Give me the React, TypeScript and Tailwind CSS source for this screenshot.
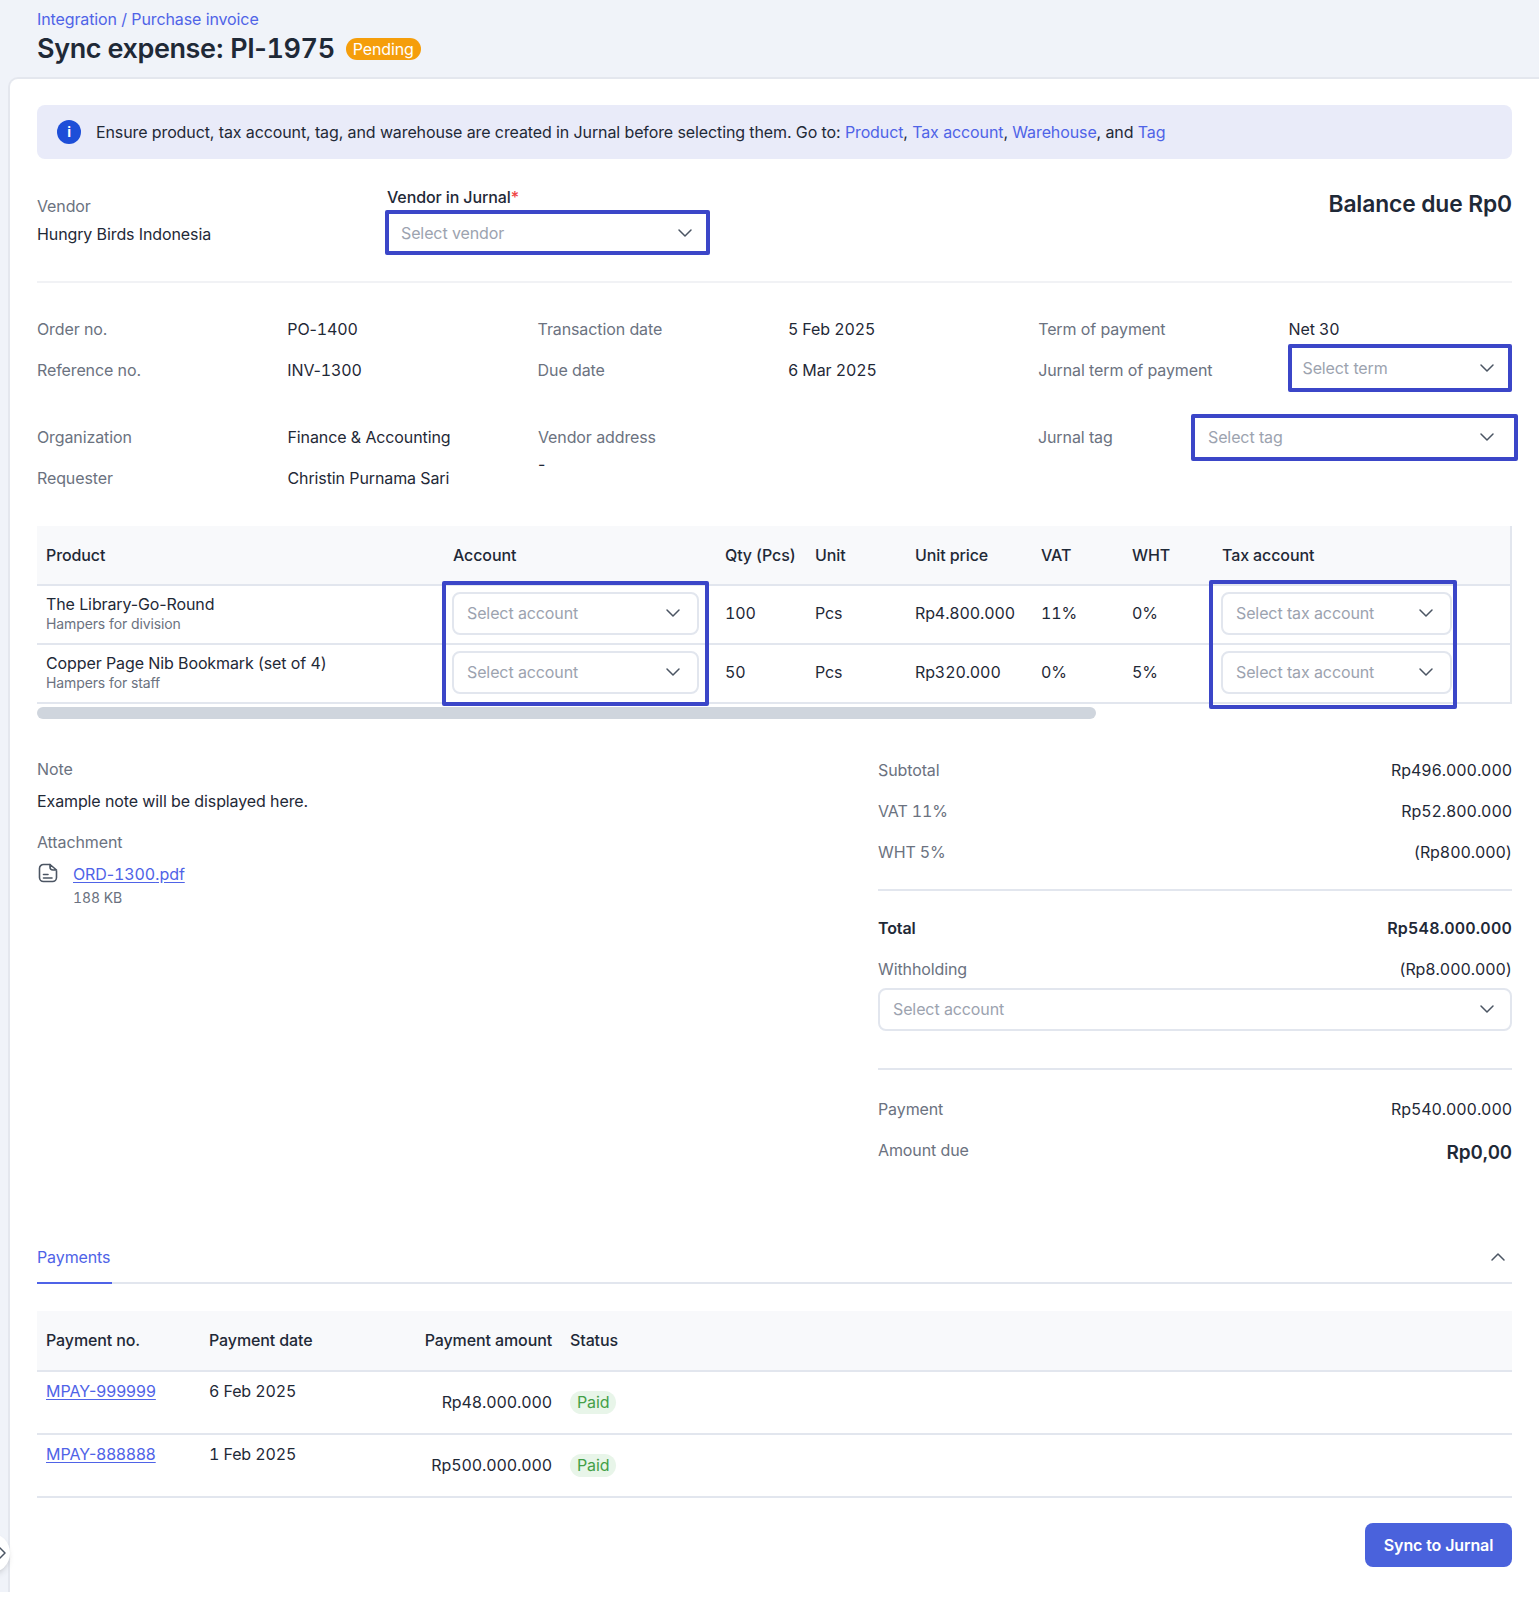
import { ChevronDown, ChevronRight, ChevronUp } from 'lucide-react';

const Select = ({ label, className }: { label: string; className: string }) => (
  <div className={`flex items-center justify-between bg-white text-[#9ca3af] ${className}`}>
    <span>{label}</span>
    <ChevronDown className="size-6 text-[#4b5563]" strokeWidth={1.5} />
  </div>
);

const Link = ({ children }: { children: string }) => <a className="text-[#4f63e7]">{children}</a>;

const Num = ({ children }: { children: string }) => <span className="tabular-nums">{children}</span>;

const rowClass = 'grid h-[40.5px] grid-cols-[repeat(5,250.3px)_1fr] grid-rows-[40.5px] items-center';

const products = [
  { name: 'The Library-Go-Round', note: 'Hampers for division', qty: '100', price: 'Rp4.800.000', vat: '11%', wht: '0%' },
  { name: 'Copper Page Nib Bookmark (set of 4)', note: 'Hampers for staff', qty: '50', price: 'Rp320.000', vat: '0%', wht: '5%' },
];

const payments = [
  { no: 'MPAY-999999', date: '6 Feb 2025', amount: 'Rp48.000.000' },
  { no: 'MPAY-888888', date: '1 Feb 2025', amount: 'Rp500.000.000' },
];

const SumRow = ({ label, value, bold }: { label: string; value: string; bold?: boolean }) => (
  <div className="flex h-[40.8px] items-center justify-between tabular-nums">
    <span className={bold ? 'font-semibold' : 'text-[#6b7280]'}>{label}</span>
    <span className={bold ? 'font-semibold tracking-[0.2px]' : 'tracking-[-0.08px]'}>{value}</span>
  </div>
);

const FileIcon = () => (
  <svg viewBox="0 0 20 20" fill="none" stroke="#4b5563" strokeWidth="1.6" className="size-5" strokeLinecap="round" strokeLinejoin="round">
    <path d="M12 1.5H5.5a4 4 0 0 0-4 4v9a4 4 0 0 0 4 4h9a4 4 0 0 0 4-4V8" />
    <path d="M12 1.5v2.5a3 3 0 0 0 3 3h3.5L12 1.5Z" />
    <path d="M5.5 11.5h4.5M5.5 15h8.5" />
  </svg>
);

function InfoRow2({ label, value }: { label: string; value: string }) {
  return (
    <div className="grid h-[41px] grid-cols-2 items-center">
      <div className="text-[#6b7280]">{label}</div>
      <div>{value}</div>
    </div>
  );
}

export default function App() {
  return (
    <div className="h-[1600px] bg-white text-base leading-6 tracking-[-0.11px] text-[#1f2937] [font-family:Inter,sans-serif]">
      <div className="relative h-[1592px] overflow-hidden bg-[#f0f3f9]">
        <header className="h-[77px] pl-[37px] pt-[7px]">
          <div className="text-[#4f63e7]">Integration / Purchase invoice</div>
          <div className="flex items-center gap-[11px]">
            <h1 className="text-[27px] font-semibold leading-9 tracking-[-0.4px]">
              Sync expense: PI-<Num>1975</Num>
            </h1>
            <span className="-mt-px rounded-full bg-[#f59e0b] px-[7px] leading-[22px] text-white">Pending</span>
          </div>
        </header>

        <main className="relative ml-[8px] h-[1515px] rounded-tl-[10px] border-l-2 border-t-2 border-[#e4e7ee] bg-white pl-[27px] pr-[27px] pt-[26px]">
          <div className="flex h-[54px] items-center rounded-lg bg-[#e9ebf9] pl-[20px]">
            <span className="flex size-6 items-center justify-center rounded-full bg-[#1d4ed8] text-sm font-bold leading-none text-white">i</span>
            <p className="ml-[15px]">
              Ensure product, tax account, tag, and warehouse are created in Jurnal before selecting them. Go to: <Link>Product</Link>, <Link>Tax account</Link>, <Link>Warehouse</Link>, and <Link>Tag</Link>
            </p>
          </div>

          <div className="flex h-[124px] items-start border-b-2 border-[#f1f2f5] pt-[27px]">
            <div className="w-[348px] pt-[8px]">
              <div className="text-[#6b7280]">Vendor</div>
              <div className="mt-[4px]">Hungry Birds Indonesia</div>
            </div>
            <div className="-mt-[1px] w-[325px]">
              <div className="pl-[2px] font-medium leading-6">
                Vendor in Jurnal<span className="text-[#ef4444]">*</span>
              </div>
              <Select label="Select vendor" className="mt-[1px] h-[45px] rounded-[2px] border-4 border-[#3b46c8] pl-[12px] pr-[9px]" />
            </div>
            <div className="ml-auto mt-[4px] text-[22.8px] font-semibold leading-7">Balance due Rp0</div>
          </div>

          <div className="mt-[26px]">
            <div className={rowClass}>
              <div className="text-[#6b7280]">Order no.</div>
              <div>
                PO-<Num>1400</Num>
              </div>
              <div className="text-[#6b7280]">Transaction date</div>
              <Num>5 Feb 2025</Num>
              <div className="text-[#6b7280]">Term of payment</div>
              <Num>Net 30</Num>
            </div>
            <div className={rowClass}>
              <div className="text-[#6b7280]">Reference no.</div>
              <div>
                INV-<Num>1300</Num>
              </div>
              <div className="text-[#6b7280]">Due date</div>
              <Num>6 Mar 2025</Num>
              <div className="text-[#6b7280]">Jurnal term of payment</div>
              <Select label="Select term" className="-mt-[3px] h-[48px] rounded-[2px] border-4 border-[#3b46c8] pl-[10px] pr-[9px]" />
            </div>
          </div>

          <div className="mt-[26px] grid grid-cols-[501px_500px_1fr]">
            <div className="w-[501px]">
              <InfoRow2 label="Organization" value="Finance & Accounting" />
              <InfoRow2 label="Requester" value="Christin Purnama Sari" />
            </div>
            <div>
              <div className="flex h-[41px] items-center text-[#6b7280]">Vendor address</div>
              <div className="-mt-[5px]">-</div>
            </div>
            <div className="flex h-[41px] items-center">
              <div className="w-[153px] shrink-0 text-[#6b7280]">Jurnal tag</div>
              <Select label="Select tag" className="-mr-[6px] mt-[1px] h-[47px] shrink-0 grow rounded-[2px] border-4 border-[#3b46c8] pl-[13px] pr-[15px]" />
            </div>
          </div>

          <div className="relative mt-[28px]">
            <table className="w-full table-fixed border-r-2 border-[#e2e6ee] text-left">
              <colgroup>
                <col className="w-[407px]" />
                <col className="w-[272px]" />
                <col className="w-[90px]" />
                <col className="w-[100px]" />
                <col className="w-[126px]" />
                <col className="w-[91px]" />
                <col className="w-[90px]" />
                <col />
              </colgroup>
              <thead>
                <tr className="h-[59px] border-b-2 border-[#e2e6ee] bg-[#f8f9fb] font-medium">
                  {['Product', 'Account', 'Qty (Pcs)', 'Unit', 'Unit price', 'VAT', 'WHT', 'Tax account'].map((h) => (
                    <th key={h} className="whitespace-nowrap px-[9px] font-medium">
                      {h}
                    </th>
                  ))}
                </tr>
              </thead>
              <tbody>
                {products.map((p) => (
                  <tr key={p.name} className="h-[59px] border-b-2 border-[#e2e6ee]">
                    <td className="px-[9px] pb-[2px]">
                      <div className="leading-5">{p.name}</div>
                      <div className="text-sm leading-[19px] text-[#6b7280]">{p.note}</div>
                    </td>
                    <td className="pb-[3px] pl-[8px]">
                      <Select label="Select account" className="h-[43px] w-[247px] rounded-lg border-2 border-[#e2e6ee] pl-[13px] pr-[12px]" />
                    </td>
                    <td className="px-[9px] pb-[3px] tabular-nums">{p.qty}</td>
                    <td className="px-[9px] pb-[3px]">Pcs</td>
                    <td className="px-[9px] pb-[3px] tabular-nums">{p.price}</td>
                    <td className="px-[9px] pb-[3px] tabular-nums">{p.vat}</td>
                    <td className="px-[9px] pb-[3px] tabular-nums">{p.wht}</td>
                    <td className="pb-[3px] pl-[8px]">
                      <Select label="Select tax account" className="h-[43px] w-[231px] rounded-lg border-2 border-[#e2e6ee] pl-[13px] pr-[12px]" />
                    </td>
                  </tr>
                ))}
              </tbody>
            </table>
            <div className="mt-[3px] h-[12px] w-[1059px] rounded-full bg-[#cfd5dd]" />
            {/* annotation boxes sitting over the table */}
            <div className="absolute left-[405px] top-[55px] h-[125px] w-[267px] rounded-[2px] border-4 border-[#3b46c8]" />
            <div className="absolute left-[1172px] top-[54px] h-[129px] w-[248px] rounded-[2px] border-4 border-[#3b46c8]" />
          </div>

          <div className="mt-[38px] flex items-start justify-between">
            <div>
              <div className="text-[#6b7280]">Note</div>
              <div className="mt-[8px]">Example note will be displayed here.</div>
              <div className="mt-[17px] text-[#6b7280]">Attachment</div>
              <div className="mt-[8px] flex gap-[15px]">
                <div className="pl-px pt-[1px]">
                  <FileIcon />
                </div>
                <div>
                  <a className="text-[#4f63e7] underline underline-offset-2">
                    ORD-<Num>1300</Num>.pdf
                  </a>
                  <div className="text-sm leading-[24px] text-[#6b7280]">
                    <Num>188</Num> KB
                  </div>
                </div>
              </div>
            </div>

            <div className="-mt-[7px] w-[634px]">
              <SumRow label="Subtotal" value="Rp496.000.000" />
              <SumRow label="VAT 11%" value="Rp52.800.000" />
              <SumRow label="WHT 5%" value="(Rp800.000)" />
              <div className="mb-[16px] mt-[17px] border-t-2 border-[#e2e6ee]" />
              <SumRow label="Total" value="Rp548.000.000" bold />
              <SumRow label="Withholding" value="(Rp8.000.000)" />
              <Select label="Select account" className="-mt-[1px] h-[43px] rounded-lg border-2 border-[#e2e6ee] pl-[13px] pr-[11px]" />
              <div className="mb-[19px] mt-[37px] border-t-2 border-[#e2e6ee]" />
              <SumRow label="Payment" value="Rp540.000.000" />
              <div className="flex h-[41px] items-center justify-between">
                <span className="text-[#6b7280]">Amount due</span>
                <span className="pt-[6px] text-[19px] font-semibold tabular-nums">Rp0,00</span>
              </div>
            </div>
          </div>

          <div className="mt-[61px] flex h-[52px] items-center justify-between border-b-2 border-[#e2e6ee]">
            <span className="-mb-[2px] flex h-[52px] w-[75px] items-center border-b-2 border-[#4f63e7] text-[#4f63e7]">Payments</span>
            <ChevronUp className="mr-[2px] size-6 text-[#4b5563]" strokeWidth={1.5} />
          </div>

          <table className="mt-[27px] w-full table-fixed text-left">
            <colgroup>
              <col className="w-[163px]" />
              <col className="w-[172px]" />
              <col className="w-[198px]" />
              <col />
            </colgroup>
            <thead>
              <tr className="h-[60px] border-b-2 border-[#e2e6ee] bg-[#f8f9fb]">
                <th className="pl-[9px] font-medium">Payment no.</th>
                <th className="pl-[9px] font-medium">Payment date</th>
                <th className="pr-[18px] text-right font-medium">Payment amount</th>
                <th className="font-medium">Status</th>
              </tr>
            </thead>
            <tbody>
              {payments.map((p) => (
                <tr key={p.no} className="h-[63px] border-b-2 border-[#e2e6ee]">
                  <td className="pl-[9px] pt-[7px] align-top">
                    <a className="tracking-normal text-[#4f63e7] underline underline-offset-2">{p.no}</a>
                  </td>
                  <td className="pl-[9px] pt-[7px] align-top tabular-nums">{p.date}</td>
                  <td className="pr-[18px] pt-[18px] text-right align-top tabular-nums">{p.amount}</td>
                  <td className="pt-[18px] align-top">
                    <span className="inline-block rounded-full bg-[#e8f5e9] px-[7px] leading-[23px] text-[#43a047]">Paid</span>
                  </td>
                </tr>
              ))}
            </tbody>
          </table>

          <div className="mt-[25px] flex justify-end">
            <button className="h-[44px] w-[147px] rounded-lg bg-[#4a62dc] font-semibold text-white">Sync to Jurnal</button>
          </div>
        </main>

        {/* sidebar collapse handle */}
        <div className="absolute left-[-30px] top-[1533px] flex h-10 w-10 items-center justify-end rounded-full bg-white shadow-md">
          <ChevronRight className="-mr-1 size-6 shrink-0 text-[#4b5563]" strokeWidth={1.5} />
        </div>
      </div>
    </div>
  );
}
